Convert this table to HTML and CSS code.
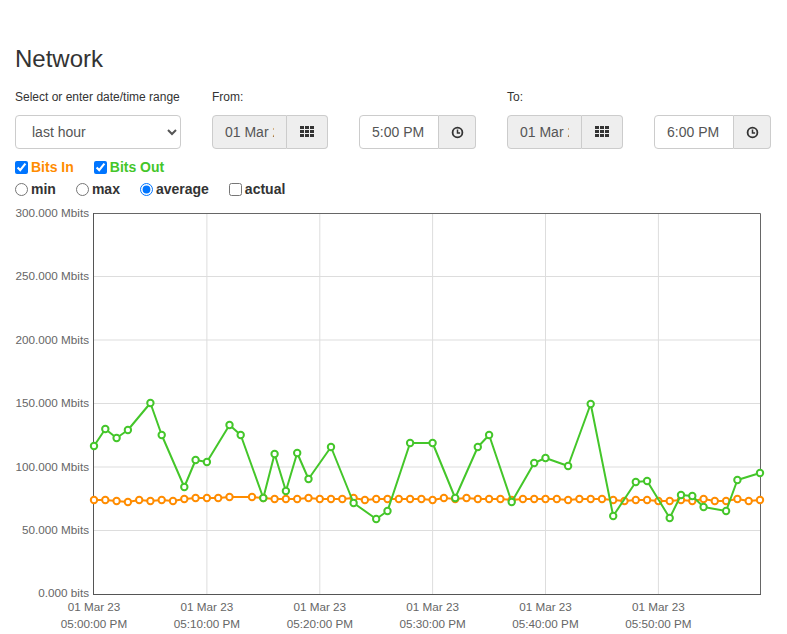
FILE: index.html
```html
<!DOCTYPE html>
<html>
<head>
<meta charset="utf-8">
<title>Network</title>
<link rel="stylesheet" href="styles.css">
</head>
<body>
<div class="page">
  <h1 class="title">Network</h1>
  <div class="controls">
    <div class="col col-range">
      <div class="lbl">Select or enter date/time range</div>
      <select class="sel">
        <option>last hour</option>
        <option>last day</option>
        <option>last week</option>
      </select>
    </div>
    <div class="col col-date">
      <div class="lbl">From:</div>
      <div class="igroup">
        <input class="inp inp-date" type="text" value="01 Mar 23" readonly>
        <span class="addon addon-date">
          <svg width="14" height="11" viewBox="0 0 14 11"><g fill="#333"><rect x="0" y="0" width="4" height="3"/><rect x="5" y="0" width="4" height="3"/><rect x="10" y="0" width="4" height="3"/><rect x="0" y="4" width="4" height="3"/><rect x="5" y="4" width="4" height="3"/><rect x="10" y="4" width="4" height="3"/><rect x="0" y="8" width="4" height="3"/><rect x="5" y="8" width="4" height="3"/><rect x="10" y="8" width="4" height="3"/></g></svg>
        </span>
      </div>
    </div>
    <div class="col col-time">
      <div class="lbl"></div>
      <div class="igroup">
        <input class="inp inp-time" type="text" value="5:00 PM">
        <span class="addon addon-time">
          <svg width="13" height="13" viewBox="-6.5 -6.5 13 13"><circle cx="0" cy="0" r="4.9" fill="none" stroke="#333" stroke-width="1.8"/><path d="M0 -3 V0.4 H2.6" fill="none" stroke="#333" stroke-width="1.5"/></svg>
        </span>
      </div>
    </div>
    <div class="col col-date">
      <div class="lbl">To:</div>
      <div class="igroup">
        <input class="inp inp-date" type="text" value="01 Mar 23" readonly>
        <span class="addon addon-date">
          <svg width="14" height="11" viewBox="0 0 14 11"><g fill="#333"><rect x="0" y="0" width="4" height="3"/><rect x="5" y="0" width="4" height="3"/><rect x="10" y="0" width="4" height="3"/><rect x="0" y="4" width="4" height="3"/><rect x="5" y="4" width="4" height="3"/><rect x="10" y="4" width="4" height="3"/><rect x="0" y="8" width="4" height="3"/><rect x="5" y="8" width="4" height="3"/><rect x="10" y="8" width="4" height="3"/></g></svg>
        </span>
      </div>
    </div>
    <div class="col col-time">
      <div class="lbl"></div>
      <div class="igroup">
        <input class="inp inp-time" type="text" value="6:00 PM">
        <span class="addon addon-time">
          <svg width="13" height="13" viewBox="-6.5 -6.5 13 13"><circle cx="0" cy="0" r="4.9" fill="none" stroke="#333" stroke-width="1.8"/><path d="M0 -3 V0.4 H2.6" fill="none" stroke="#333" stroke-width="1.5"/></svg>
        </span>
      </div>
    </div>
  </div>

  <div class="opts">
    <label class="opt"><input type="checkbox" checked><span class="in">Bits In</span></label>
    <label class="opt"><input type="checkbox" checked><span class="out">Bits Out</span></label>
  </div>
  <div class="opts">
    <label class="opt"><input type="radio" name="agg"><span>min</span></label>
    <label class="opt"><input type="radio" name="agg"><span>max</span></label>
    <label class="opt"><input type="radio" name="agg" checked><span>average</span></label>
    <label class="opt"><input type="checkbox"><span>actual</span></label>
  </div>

  <svg class="chart" width="772" height="430" viewBox="15 204 772 430">
    <defs>
      <marker id="mo" markerUnits="userSpaceOnUse" markerWidth="10" markerHeight="10" refX="5" refY="5" viewBox="0 0 10 10"><circle cx="5" cy="5" r="3.2" fill="#fff" stroke="#ff8c00" stroke-width="2"/></marker>
      <marker id="mg" markerUnits="userSpaceOnUse" markerWidth="10" markerHeight="10" refX="5" refY="5" viewBox="0 0 10 10"><circle cx="5" cy="5" r="3.2" fill="#fff" stroke="#44c62a" stroke-width="2"/></marker>
    </defs>
    <g class="grid">
      <line x1="94" y1="276.5" x2="760" y2="276.5"/>
      <line x1="94" y1="340" x2="760" y2="340"/>
      <line x1="94" y1="403.5" x2="760" y2="403.5"/>
      <line x1="94" y1="467" x2="760" y2="467"/>
      <line x1="94" y1="530.5" x2="760" y2="530.5"/>
      <line x1="206.9" y1="213" x2="206.9" y2="594"/>
      <line x1="319.8" y1="213" x2="319.8" y2="594"/>
      <line x1="432.6" y1="213" x2="432.6" y2="594"/>
      <line x1="545.5" y1="213" x2="545.5" y2="594"/>
      <line x1="658.4" y1="213" x2="658.4" y2="594"/>
    </g>
    <g class="frame">
      <line x1="93.5" y1="213.5" x2="760.5" y2="213.5"/>
      <line x1="760.5" y1="213.5" x2="760.5" y2="594.5"/>
    </g>
    <g class="axis">
      <line x1="93.5" y1="213" x2="93.5" y2="595"/>
      <line x1="93" y1="594.5" x2="761" y2="594.5"/>
    </g>
    <g class="ylab">
      <text x="89" y="216.5">300.000 Mbits</text>
      <text x="89" y="280">250.000 Mbits</text>
      <text x="89" y="343.5">200.000 Mbits</text>
      <text x="89" y="407">150.000 Mbits</text>
      <text x="89" y="470.5">100.000 Mbits</text>
      <text x="89" y="534">50.000 Mbits</text>
      <text x="89" y="597">0.000 bits</text>
    </g>
    <g class="xlab">
      <text x="94" y="611">01 Mar 23</text><text x="94" y="628">05:00:00 PM</text>
      <text x="206.9" y="611">01 Mar 23</text><text x="206.9" y="628">05:10:00 PM</text>
      <text x="319.8" y="611">01 Mar 23</text><text x="319.8" y="628">05:20:00 PM</text>
      <text x="432.6" y="611">01 Mar 23</text><text x="432.6" y="628">05:30:00 PM</text>
      <text x="545.5" y="611">01 Mar 23</text><text x="545.5" y="628">05:40:00 PM</text>
      <text x="658.4" y="611">01 Mar 23</text><text x="658.4" y="628">05:50:00 PM</text>
    </g>
    <polyline class="s-in" points="94,500 105.3,500 116.6,501 127.9,502 139.2,500 150.4,501 161.7,500 173,501 184.3,499 195.6,498 206.9,498 218.2,498 229.5,497 252,497 263.3,498 274.6,499 285.9,499 297.2,499 308.5,498 319.8,499 331,499 342.3,499 353.6,498 364.9,500 376.2,499 387.5,499 398.8,499 410.1,499 421.4,499 432.6,500 443.9,498 455.2,499 466.5,498 477.8,499 489.1,499 500.4,499 511.7,500 522.9,499 534.2,499 545.5,499 556.8,499 568.1,500 579.4,499 590.7,499 602,499 613.2,500 624.5,501 635.8,500 647.1,500 658.4,501 669.7,501 681,500 692.3,501 703.6,499 714.8,501 726.1,501 737.4,499 748.7,501 760,500"/>
    <polyline class="s-out" points="94,446 105.3,429 116.6,438 127.9,430 150.4,403 161.7,435 184.3,487 195.6,460 206.9,462 229.5,425 240.7,435 263.3,498 274.6,454 285.9,491 297.2,453 308.5,479 331,447 353.6,503 376.2,519 387.5,511 410.1,443 432.6,443 455.2,498 477.8,447 489.1,435 511.7,502 534.2,463 545.5,458 568.1,466 590.7,404 613.2,516 635.8,482 647.1,481 669.7,518 681,495 692.3,496 703.6,507 726.1,511 737.4,480 760,473"/>
  </svg>
</div>
</body>
</html>
```

FILE: styles.css
```css
html, body {
  margin: 0;
  padding: 0;
  background: #fff;
}
body {
  font-family: "Liberation Sans", Arial, sans-serif;
  font-size: 14px;
  color: #333;
}
.page {
  padding: 0 0 0 15px;
}
.title {
  margin: 46px 0 0;
  font-size: 24px;
  font-weight: normal;
  line-height: 26.4px;
  color: #333;
}
.controls {
  display: flex;
  gap: 31px;
  margin-top: 14px;
}
.col-range { width: 166px; }
.col-date { width: 116px; }
.col-time { width: 117px; }
.lbl {
  font-size: 12px;
  line-height: 17px;
  height: 17px;
  margin-top: 3px;
  margin-bottom: 8.6px;
  white-space: nowrap;
}
.sel {
  display: block;
  width: 166px;
  height: 34px;
  padding: 6px 12px;
  font-family: "Liberation Sans", Arial, sans-serif;
  font-size: 14px;
  color: #555;
  background: #fff;
  border: 1px solid #ccc;
  border-radius: 4px;
  box-sizing: border-box;
}
.igroup {
  display: flex;
  height: 34px;
}
.inp {
  box-sizing: border-box;
  height: 34px;
  padding: 6px 12px;
  font-family: "Liberation Sans", Arial, sans-serif;
  font-size: 14px;
  color: #555;
  background: #fff;
  border: 1px solid #ccc;
  border-radius: 4px 0 0 4px;
  outline: none;
  margin: 0;
}
.inp-date {
  width: 75px;
  background: #eee;
}
.inp-time {
  width: 80px;
}
.addon {
  box-sizing: border-box;
  height: 34px;
  display: flex;
  align-items: center;
  justify-content: center;
  background: #eee;
  border: 1px solid #ccc;
  border-left: 0;
  border-radius: 0 4px 4px 0;
}
.addon-date { width: 41px; padding-bottom: 1px; }
.addon-time { width: 37px; padding-left: 1px; }
.opts {
  display: flex;
  gap: 20px;
  height: 22px;
  align-items: center;
}
.controls + .opts { margin-top: 7px; }
.opt {
  display: flex;
  align-items: center;
  font-weight: bold;
  font-size: 14px;
  line-height: 20px;
}
.opt input {
  margin: 0 3px 0 0;
  width: 13px;
  height: 13px;
}
.opt .in { color: #ff8c00; }
.opt .out { color: #44c62a; }
.chart {
  display: block;
  margin-top: 4px;
}
.grid line {
  stroke: #ddd;
  stroke-width: 1;
}
.frame line {
  stroke: #666;
  stroke-width: 1;
}
.axis line {
  stroke: #555;
  stroke-width: 1;
}
.ylab text {
  font-family: "Liberation Sans", Arial, sans-serif;
  font-size: 11.7px;
  fill: #666;
  text-anchor: end;
}
.xlab text {
  font-family: "Liberation Sans", Arial, sans-serif;
  font-size: 11.7px;
  fill: #666;
  text-anchor: middle;
}
.s-in {
  fill: none;
  stroke: #ff8c00;
  stroke-width: 2;
  stroke-linejoin: round;
  marker-start: url(#mo);
  marker-mid: url(#mo);
  marker-end: url(#mo);
}
.s-out {
  fill: none;
  stroke: #44c62a;
  stroke-width: 2;
  stroke-linejoin: round;
  marker-start: url(#mg);
  marker-mid: url(#mg);
  marker-end: url(#mg);
}
```
